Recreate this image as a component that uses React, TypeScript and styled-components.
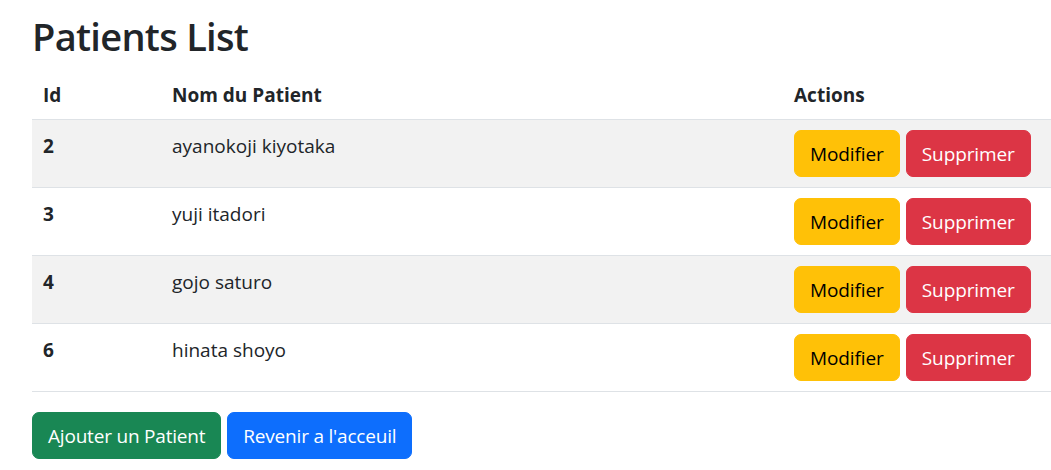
import React from "react";
import styled, { createGlobalStyle } from "styled-components";

const GlobalStyle = createGlobalStyle`
  html, body {
    margin: 0;
    padding: 0;
    background: #ffffff;
  }
  body {
    font-family: "Open Sans", "Segoe UI", "Noto Sans", Arial, sans-serif;
    color: #212529;
    font-size: 19px;
    line-height: 1.5;
  }
  * { box-sizing: border-box; }
`;

const Page = styled.div`
  padding: 0 0 0 32px;
`;

const Title = styled.h1`
  margin: 14px 0 12px 0;
  font-size: 38px;
  font-weight: 600;
  line-height: 1.2;
  letter-spacing: -0.7px;
  color: #212529;
`;

const Table = styled.table`
  width: 100%;
  border-collapse: collapse;
  table-layout: fixed;
`;

const HeadCell = styled.th<{ $w?: number }>`
  text-align: left;
  font-weight: 700;
  padding: 9px 10px 10px 11px;
  border-bottom: 1px solid #dee2e6;
  vertical-align: top;
  ${(p) => (p.$w ? `width: ${p.$w}px;` : "")}
`;

const Row = styled.tr<{ $striped: boolean }>`
  background: ${(p) => (p.$striped ? "#f2f2f2" : "#ffffff")};
`;

const Cell = styled.td<{ $bold?: boolean }>`
  padding: 12px 10px 10px 11px;
  border-bottom: 1px solid #dee2e6;
  vertical-align: top;
  font-weight: ${(p) => (p.$bold ? 700 : 400)};
`;

const ActionCell = styled.td`
  padding: 10px 10px 10px 11px;
  border-bottom: 1px solid #dee2e6;
  vertical-align: top;
`;

const ButtonGroup = styled.div`
  display: flex;
  gap: 6px;
`;

const Button = styled.button<{ $bg: string; $fg: string; $tight?: boolean }>`
  font-family: inherit;
  font-size: 19px;
  line-height: 29px;
  font-weight: 400;
  letter-spacing: ${(p) => (p.$tight ? "-0.2px" : "-0.1px")};
  padding: 9px 15px 7px;
  border: 1px solid ${(p) => p.$bg};
  border-radius: 7px;
  background: ${(p) => p.$bg};
  color: ${(p) => p.$fg};
  cursor: pointer;
  white-space: nowrap;
`;

const Footer = styled.div`
  display: flex;
  gap: 6px;
  margin-top: 20px;
`;

const patients = [
  { id: 2, name: "ayanokoji kiyotaka" },
  { id: 3, name: "yuji itadori" },
  { id: 4, name: "gojo saturo" },
  { id: 6, name: "hinata shoyo" },
];

export default function App() {
  return (
    <>
      <GlobalStyle />
      <Page>
        <Title>Patients List</Title>
        <Table>
          <thead>
            <tr>
              <HeadCell $w={129}>Id</HeadCell>
              <HeadCell $w={622}>Nom du Patient</HeadCell>
              <HeadCell>Actions</HeadCell>
            </tr>
          </thead>
          <tbody>
            {patients.map((p, i) => (
              <Row key={p.id} $striped={i % 2 === 0}>
                <Cell $bold>{p.id}</Cell>
                <Cell>{p.name}</Cell>
                <ActionCell>
                  <ButtonGroup>
                    <Button $bg="#ffc107" $fg="#000000">Modifier</Button>
                    <Button $bg="#dc3545" $fg="#ffffff">Supprimer</Button>
                  </ButtonGroup>
                </ActionCell>
              </Row>
            ))}
          </tbody>
        </Table>
        <Footer>
          <Button $bg="#198754" $fg="#ffffff" $tight>Ajouter un Patient</Button>
          <Button $bg="#0d6efd" $fg="#ffffff" $tight>Revenir a l'acceuil</Button>
        </Footer>
      </Page>
    </>
  );
}
